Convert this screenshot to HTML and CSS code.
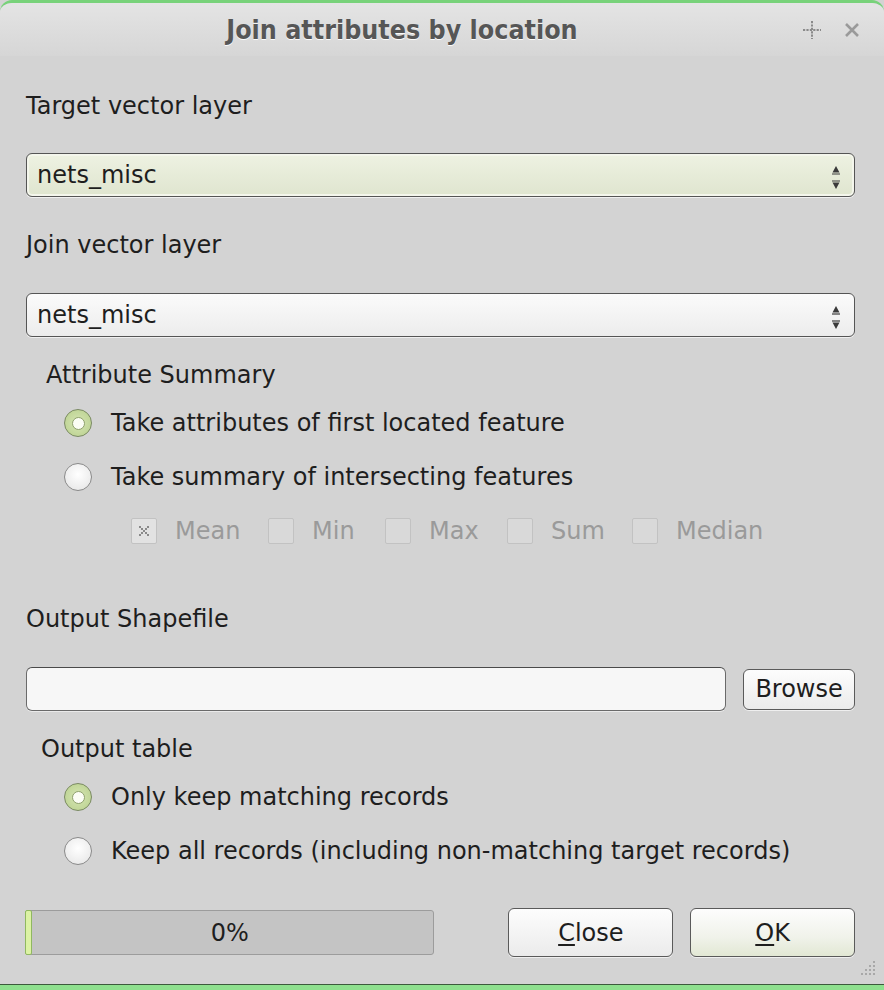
FILE: index.html
```html
<!DOCTYPE html>
<html>
<head>
<meta charset="utf-8">
<link rel="stylesheet" href="styles.css">
</head>
<body>
<div class="window">
  <div class="titlebar">
    <div class="title"><span class="ttext">Join attributes by location</span></div>
    <div class="tbtns">
      <svg class="tbtn" width="22" height="22" viewBox="0 0 22 22"><path d="M11 2v18M2 11h18" stroke="#8a8a8a" stroke-width="2" stroke-dasharray="2.2 1.2"/></svg>
      <svg class="tbtn" width="20" height="20" viewBox="0 0 20 20"><path d="M4 4l12 12M16 4L4 16" stroke="#9a9a9a" stroke-width="2.6"/></svg>
    </div>
  </div>
  <div class="content">
    <div class="label l1">Target vector layer</div>
    <div class="combo focused">
      <span class="ctext">nets_misc</span>
      <svg class="arrows" width="12" height="32" viewBox="0 0 12 32"><path d="M6 7L2.5 13.5h7z" fill="#3a3a3a"/><path d="M2 15h8" stroke="#3a3a3a" stroke-width="1.2"/><path d="M2 22h8" stroke="#3a3a3a" stroke-width="1.2"/><path d="M2.5 23.5h7L6 30z" fill="#3a3a3a"/></svg>
    </div>
    <div class="label l2">Join vector layer</div>
    <div class="combo second">
      <span class="ctext">nets_misc</span>
      <svg class="arrows" width="12" height="32" viewBox="0 0 12 32"><path d="M6 7L2.5 13.5h7z" fill="#3a3a3a"/><path d="M2 15h8" stroke="#3a3a3a" stroke-width="1.2"/><path d="M2 22h8" stroke="#3a3a3a" stroke-width="1.2"/><path d="M2.5 23.5h7L6 30z" fill="#3a3a3a"/></svg>
    </div>
    <div class="label group">Attribute Summary</div>
    <div class="radiorow first"><span class="radio checked"><span class="dot"></span></span><span class="rtext">Take attributes of first located feature</span></div>
    <div class="radiorow"><span class="radio"></span><span class="rtext">Take summary of intersecting features</span></div>
    <div class="checkrow">
      <span class="chk w-mean"><span class="box">
        <svg width="14" height="14" viewBox="0 0 14 14"><g fill="#8a8a8a"><rect x="2" y="2" width="2" height="2"/><rect x="10" y="2" width="2" height="2"/><rect x="6" y="6" width="2" height="2"/><rect x="4" y="4" width="2" height="2"/><rect x="8" y="4" width="2" height="2"/><rect x="4" y="8" width="2" height="2"/><rect x="8" y="8" width="2" height="2"/><rect x="2" y="10" width="2" height="2"/><rect x="10" y="10" width="2" height="2"/></g></svg>
      </span><span class="ctxt">Mean</span></span>
      <span class="chk w-min"><span class="box"></span><span class="ctxt">Min</span></span>
      <span class="chk w-max"><span class="box"></span><span class="ctxt">Max</span></span>
      <span class="chk w-sum"><span class="box"></span><span class="ctxt">Sum</span></span>
      <span class="chk"><span class="box"></span><span class="ctxt">Median</span></span>
    </div>
    <div class="label l3">Output Shapefile</div>
    <div class="filerow">
      <div class="lineedit"></div>
      <div class="button browse">Browse</div>
    </div>
    <div class="label group2">Output table</div>
    <div class="radiorow first"><span class="radio checked"><span class="dot"></span></span><span class="rtext">Only keep matching records</span></div>
    <div class="radiorow"><span class="radio"></span><span class="rtext">Keep all records (including non-matching target records)</span></div>
    <div class="bottomrow">
      <div class="progress"><span class="chunk"></span><span class="ptext">0%</span></div>
      <div class="button big"><span class="u">C</span>lose</div>
      <div class="button big ok"><span class="u">O</span>K</div>
    </div>
  </div>
  <svg class="grip" width="20" height="20" viewBox="0 0 20 20"><g fill="#a8a8a8"><rect x="15" y="3" width="2" height="2"/><rect x="11" y="7" width="2" height="2"/><rect x="15" y="7" width="2" height="2"/><rect x="7" y="11" width="2" height="2"/><rect x="11" y="11" width="2" height="2"/><rect x="15" y="11" width="2" height="2"/><rect x="3" y="15" width="2" height="2"/><rect x="7" y="15" width="2" height="2"/><rect x="11" y="15" width="2" height="2"/><rect x="15" y="15" width="2" height="2"/></g></svg>
  <div class="bottomborder"></div>
</div>
</body>
</html>
```
FILE: styles.css
```css
html, body {
  margin: 0;
  padding: 0;
  background: #d3d3d3;
}
.window {
  position: relative;
  width: 884px;
  height: 990px;
  box-sizing: border-box;
  background: #d3d3d3;
  border-top: 3px solid #78d27a;
  border-radius: 12px 12px 0 0;
  overflow: hidden;
  font-family: "DejaVu Sans", "Liberation Sans", sans-serif;
  color: #1e1e1e;
  font-size: 24px;
}
.titlebar {
  height: 53px;
  display: flex;
  align-items: center;
  background: linear-gradient(#e4e4e4, #d6d6d6);
  position: relative;
}
.title {
  width: 804px;
  text-align: center;
  font-family: "DejaVu Sans", sans-serif;
  font-weight: bold;
  font-size: 26px;
  color: #565656;
  text-shadow: 0 1px 0 #fafafa;
}
.ttext {
  display: inline-block;
  transform: scaleX(0.92);
}
.tbtns {
  display: flex;
  align-items: center;
  gap: 19px;
  margin-left: -3px;
}
.content {
  padding: 0 29px 0 26px;
  display: flex;
  flex-direction: column;
}
.label {
  height: 30px;
  line-height: 30px;
  white-space: nowrap;
}
.l1 { margin-top: 35px; }
.l2 { margin-top: 33px; }
.l3 { margin-top: 46px; }
.group { margin-top: 23px; padding-left: 20px; }
.group2 { margin-top: 23px; padding-left: 15px; }
.combo {
  margin-top: 32px;
  height: 44px;
  box-sizing: border-box;
  border: 1px solid #555;
  border-radius: 6px;
  background: linear-gradient(#fbfbfb, #ececec);
  display: flex;
  align-items: center;
  padding: 0 12px 0 10px;
  box-shadow: 0 1px 0 #f0f0f0;
}
.combo.second { margin-top: 33px; }
.combo.focused {
  background: linear-gradient(#eef2e2, #dfe5cf);
  box-shadow: inset 0 0 0 2px #f4f6ec, 0 1px 0 #f0f0f0;
}
.ctext { flex: 1; }
.arrows { display: block; }
.radiorow {
  height: 54px;
  display: flex;
  align-items: center;
  padding-left: 38px;
  white-space: nowrap;
}
.radiorow.first { margin-top: 6px; }
.radio {
  width: 28px;
  height: 28px;
  box-sizing: border-box;
  border-radius: 50%;
  border: 1.5px solid #8a8a8a;
  background: radial-gradient(circle at 50% 40%, #ffffff, #ececec 70%, #dcdcdc);
  display: flex;
  align-items: center;
  justify-content: center;
  margin-right: 19px;
}
.radio.checked {
  border: 1.5px solid #7a8a62;
  background: radial-gradient(circle, #d6e6b4, #b8cf8c);
}
.dot {
  width: 13px;
  height: 13px;
  box-sizing: border-box;
  border-radius: 50%;
  background: #fbfdf4;
  border: 1px solid #8ea06c;
}
.checkrow {
  height: 54px;
  display: flex;
  align-items: center;
  padding-left: 105px;
  color: #9a9a9a;
  white-space: nowrap;
}
.chk {
  display: flex;
  align-items: center;
}
.box {
  width: 26px;
  height: 26px;
  box-sizing: border-box;
  border: 1px solid #c2c2c2;
  background: #d9d9d9;
  border-radius: 2px;
  margin-right: 18px;
  display: flex;
  align-items: center;
  justify-content: center;
}
.w-mean .box { background: #e2e2e2; }
.w-mean { width: 137px; }
.w-min { width: 117px; }
.w-max { width: 122px; }
.w-sum { width: 125px; }
.filerow {
  margin-top: 33px;
  display: flex;
  align-items: center;
  height: 44px;
}
.lineedit {
  width: 701px;
  height: 44px;
  box-sizing: border-box;
  border: 1px solid #6a6a6a;
  border-top-color: #4a4a4a;
  border-radius: 6px;
  background: #f7f7f7;
  box-shadow: 0 1px 0 #eaeaea;
}
.button {
  box-sizing: border-box;
  border: 1px solid #5a5a5a;
  border-radius: 6px;
  background: linear-gradient(#fdfdfd, #ebebeb);
  display: flex;
  align-items: center;
  justify-content: center;
  box-shadow: 0 1px 0 #efefef;
}
.browse {
  margin-left: 17px;
  width: 112px;
  height: 41px;
}
.bottomrow {
  margin-top: 30px;
  display: flex;
  align-items: center;
  height: 49px;
}
.progress {
  width: 410px;
  height: 45px;
  box-sizing: border-box;
  border: 1px solid #9c9c9c;
  border-radius: 3px;
  background: #c4c4c4;
  position: relative;
  display: flex;
  align-items: center;
  justify-content: center;
  margin-left: -1px;
}
.chunk {
  position: absolute;
  left: 0;
  top: 0;
  bottom: 0;
  width: 5px;
  background: #dcf2a4;
  border: 1px solid #90b860;
  border-radius: 2px;
  margin: -1px;
}
.big {
  width: 165px;
  height: 49px;
}
.progress + .big { margin-left: 74px; }
.ok {
  margin-left: 17px;
  background: linear-gradient(#fdfdfd, #f0f2ea 60%, #e2e8d4);
}
.u { text-decoration: underline; text-underline-offset: 3px; }
.grip {
  position: absolute;
  right: 6px;
  bottom: 12px;
}
.bottomborder {
  position: absolute;
  left: 0;
  right: 0;
  bottom: 0;
  height: 5px;
  background: #8ee08e;
  border-top: 1px solid #3c5a3c;
}
```
